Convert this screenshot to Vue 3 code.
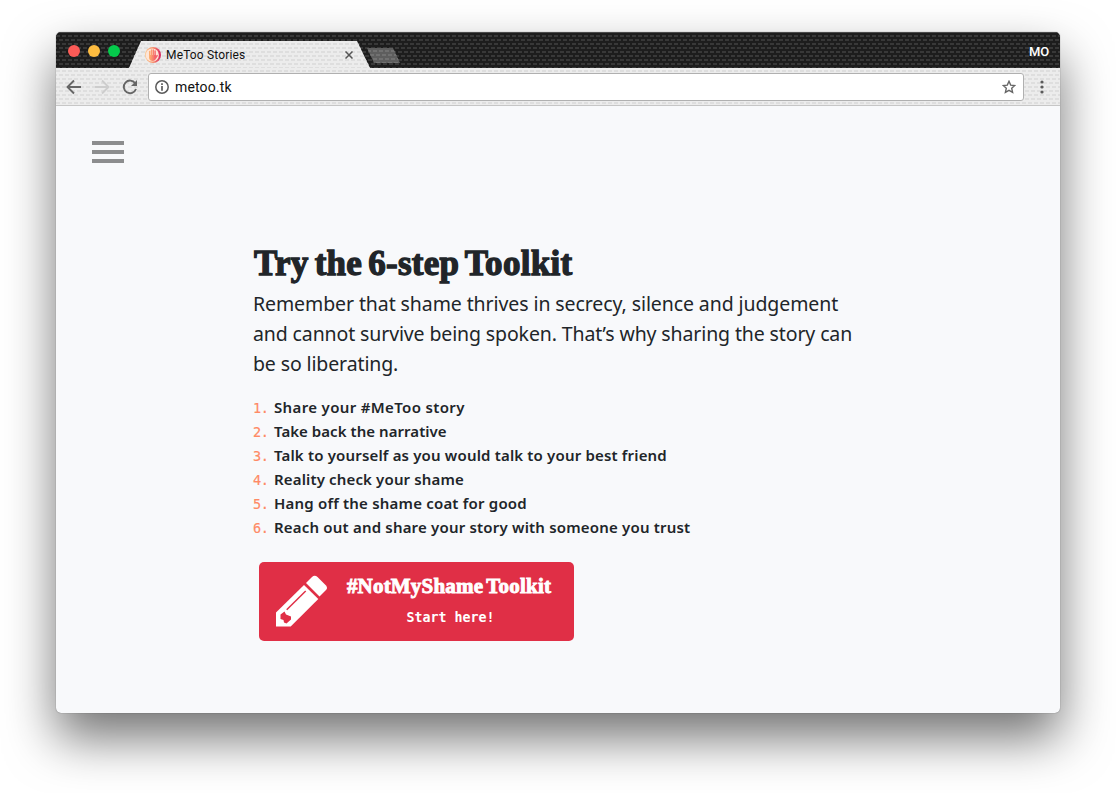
<script setup>
const steps = [
  'Share your #MeToo story',
  'Take back the narrative',
  'Talk to yourself as you would talk to your best friend',
  'Reality check your shame',
  'Hang off the shame coat for good',
  'Reach out and share your story with someone you trust'
]
const lines = [
  'Remember that shame thrives in secrecy, silence and judgement',
  'and cannot survive being spoken. That’s why sharing the story can',
  'be so liberating.'
]
</script>

<template>
  <div class="desktop">
    <div class="window">
      <div class="titlebar">
        <div class="lights">
          <span class="light light-close" />
          <span class="light light-min" />
          <span class="light light-max" />
        </div>
        <div class="tab">
          <svg class="favicon" width="16" height="16" viewBox="0 0 16 16">
            <defs>
              <linearGradient id="ring" x1="0" x2="1" y1="0" y2="0">
                <stop offset="0" stop-color="#fdc98f" />
                <stop offset="0.5" stop-color="#f9906b" />
                <stop offset="1" stop-color="#d6215f" />
              </linearGradient>
              <linearGradient id="hand" x1="0" x2="1" y1="0" y2="0">
                <stop offset="0" stop-color="#fdb56f" />
                <stop offset="1" stop-color="#f4586a" />
              </linearGradient>
            </defs>
            <circle cx="8" cy="8" r="8" fill="url(#ring)" />
            <circle cx="7.3" cy="8" r="6.6" fill="#fde6d8" />
            <path d="M4 8h7v3q-.500 3-3.500 3T4 11z" fill="url(#hand)" />
            <path d="M4.700 4.500v5" stroke="#fdae72" stroke-width="1.400" stroke-linecap="round" />
            <path d="M6.500 3v6" stroke="#fb9a70" stroke-width="1.400" stroke-linecap="round" />
            <path d="M8.300 3v6" stroke="#f9806b" stroke-width="1.400" stroke-linecap="round" />
            <path d="M10.100 4v6M10.600 11l1.600-2.500" stroke="#f4626a" stroke-width="1.400" stroke-linecap="round" />
          </svg>
          <span class="tab-title">MeToo Stories</span>
          <svg class="tab-close" width="8" height="8" viewBox="0 0 8 8">
            <path d="M.5.5l7 7M7.500.500l-7 7" stroke="#555" stroke-width="1.500" />
          </svg>
        </div>
        <div class="new-tab" />
        <span class="profile">MO</span>
      </div>
      <div class="toolbar">
        <svg class="nav-icon" width="16" height="16" viewBox="0 0 16 16">
          <path d="M15 8H2M8 1.500L1.500 8 8 14.500" fill="none" stroke="#666" stroke-width="1.900" />
        </svg>
        <svg class="nav-icon" width="16" height="16" viewBox="0 0 16 16">
          <path d="M1 8h13M8 1.500L14.500 8 8 14.500" fill="none" stroke="#cdcdcd" stroke-width="1.900" />
        </svg>
        <svg class="nav-icon" width="16" height="16" viewBox="0 0 16 16">
          <path d="M13.200 4.200A6.300 6.300 0 1 0 14 10" fill="none" stroke="#666" stroke-width="1.900" />
          <path d="M15 1v6H9z" fill="#666" />
        </svg>
        <div class="address">
          <svg width="14" height="14" viewBox="0 0 14 14">
            <circle cx="7" cy="7" r="6.200" fill="none" stroke="#5a5a5a" stroke-width="1.500" />
            <path d="M7 3.200v1.700M7 6v4.700" stroke="#5a5a5a" stroke-width="1.700" />
          </svg>
          <span class="url">metoo.tk</span>
          <svg width="14" height="14" viewBox="0 0 14 14">
            <path d="M7 1.300l1.700 3.800 4.100.4-3.100 2.800.9 4.100L7 10.300l-3.600 2.100.9-4.100L1.200 5.500l4.100-.4z" fill="none" stroke="#666" stroke-width="1.400" />
          </svg>
        </div>
        <svg class="menu-dots" width="4" height="14" viewBox="0 0 4 14">
          <circle cx="2" cy="2" r="1.600" fill="#5a5a5a" />
          <circle cx="2" cy="7" r="1.600" fill="#5a5a5a" />
          <circle cx="2" cy="12" r="1.600" fill="#5a5a5a" />
        </svg>
      </div>
      <div class="page">
        <button class="hamburger" aria-label="Menu"><i /><i /><i /></button>
        <main class="content">
          <h1 class="title">Try the 6-step Toolkit</h1>
          <p class="intro">
            <span v-for="line in lines" :key="line" class="intro-line">{{ line }}</span>
          </p>
          <ol class="steps">
            <li v-for="(step, i) in steps" :key="step">
              <span class="num">{{ i + 1 }}.</span>
              <span :class="['step', `step-${i + 1}`]">{{ step }}</span>
            </li>
          </ol>
          <a class="cta">
            <svg class="pencil" width="52" height="52" viewBox="0 0 52 52">
              <path d="M0 37.500L28 10l14.300 14L14.700 51.500H0z" fill="#fff" />
              <path d="M30 8l6-6q2.500-2.500 5.500 0l8.500 8.500q2 2.500 0 4.500l-6.500 6.500z" fill="#fff" />
              <path d="M10.700 34.700L29.700 16" stroke="#e02f46" stroke-width="1.500" />
              <path d="M4.500 39.500L8.500 36.500l1.500 3 5 2v3l-4.500 4-2.500-1-.500-2.500-3-1z" fill="#e02f46" />
            </svg>
            <span class="cta-text">
              <span class="cta-title">#NotMyShame Toolkit</span>
              <span class="cta-sub">Start here!</span>
            </span>
          </a>
        </main>
      </div>
    </div>
  </div>
</template>

<style>
body {
  background: #fff;
  overflow: hidden;
}
</style>

<style scoped>
.desktop {
  box-sizing: border-box;
  width: 1116px;
  height: 793px;
  padding: 32px 56px;
  overflow: hidden;
  font-family: Roboto, sans-serif;
}
.window {
  height: 681px;
  border-radius: 5px;
  overflow: hidden;
  background: #f8f9fb;
  box-shadow: 0 0 1px rgba(0, 0, 0, 0.6), 0 25px 50px rgba(0, 0, 0, 0.55);
}
.titlebar {
  display: flex;
  align-items: flex-end;
  box-sizing: border-box;
  height: 36px;
  border-top: 1px solid #4a4a4a;
  background: #1d1d1d url("data:image/svg+xml,%3Csvg xmlns='http://www.w3.org/2000/svg' width='6' height='8'%3E%3Cpath d='M0 2h4v2H0zM3 6h3v2H3zM0 6h1v2H0z' fill='%23383838'/%3E%3C/svg%3E");
}
.lights {
  display: flex;
  gap: 8px;
  width: 60px;
  padding: 0 1px 11px 12px;
}
.light {
  width: 12px;
  height: 12px;
  border-radius: 50%;
}
.light-close {
  background: #fc5b57;
}
.light-min {
  background: #fdbc40;
}
.light-max {
  background: #05cb4c;
}
.tab,
.toolbar {
  background: #ececec url("data:image/svg+xml,%3Csvg xmlns='http://www.w3.org/2000/svg' width='6' height='8'%3E%3Cpath d='M0 2h4v2H0zM3 6h3v2H3zM0 6h1v2H0z' fill='%23dedede'/%3E%3C/svg%3E");
}
.tab {
  display: flex;
  align-items: center;
  box-sizing: border-box;
  width: 241px;
  height: 27px;
  padding: 0 17px 0 16px;
  clip-path: polygon(12px 0, 228px 0, 241px 100%, 0 100%);
}
.tab-title {
  flex: 1;
  margin-left: 5px;
  color: #111;
  font-size: 12px;
  letter-spacing: 0.15px;
}
.new-tab {
  width: 33px;
  height: 15px;
  margin: 0 0 5px -3px;
  background: #5e5e5e url("data:image/svg+xml,%3Csvg xmlns='http://www.w3.org/2000/svg' width='6' height='8'%3E%3Cpath d='M0 2h4v2H0zM3 6h3v2H3zM0 6h1v2H0z' fill='%23717171'/%3E%3C/svg%3E");
  clip-path: polygon(0 0, 26px 0, 33px 100%, 7px 100%);
}
.profile {
  margin: 0 11px 9px auto;
  color: #fff;
  font-size: 13px;
  font-weight: 500;
  letter-spacing: -0.2px;
}
.toolbar {
  display: flex;
  align-items: center;
  box-sizing: border-box;
  height: 38px;
  padding: 0 16px 0 10px;
  border-bottom: 1px solid #c6c6c6;
}
.nav-icon {
  margin-right: 12px;
}
.address {
  display: flex;
  flex: 1;
  align-items: center;
  box-sizing: border-box;
  height: 28px;
  margin-right: 16px;
  margin-left: -2px;
  padding: 0 7px 0 6px;
  border: 1px solid #b0b0b0;
  border-radius: 3px;
  background: #fff;
}
.url {
  flex: 1;
  margin-left: 6px;
  color: #111;
  font-size: 14px;
  letter-spacing: 0.15px;
}
.page {
  padding: 35px 36px;
}
.hamburger {
  display: flex;
  flex-direction: column;
  gap: 5px;
  width: 32px;
  padding: 0;
  border: 0;
  background: none;
}
.hamburger i {
  height: 4px;
  background: #8c8d8e;
}
.content {
  margin: 82px 0 0 161px;
}
.title {
  box-sizing: border-box;
  height: 44px;
  margin: 0;
  padding-left: 1px;
  color: #212529;
  font: 700 35px/38px "Liberation Serif", serif;
  letter-spacing: 0.28px;
  word-spacing: -3px;
  white-space: nowrap;
  -webkit-text-stroke: 1.3px #212529;
}
.intro {
  margin: 0;
  color: #212529;
  font: 19.5px/30px "Noto Sans", sans-serif;
  letter-spacing: -0.09px;
}
.intro-line {
  display: block;
  white-space: nowrap;
}
.intro-line:nth-child(n + 2) {
  letter-spacing: -0.12px;
}
.steps {
  margin: 16px 0 23px;
  padding: 0;
  list-style: none;
}
.steps li {
  display: flex;
  height: 24px;
  color: #212529;
  font: 600 15px/24px "Noto Sans", sans-serif;
}
.num {
  width: 21px;
  color: #ff8a65;
  font: 13.5px/26px "DejaVu Sans Mono", monospace;
  letter-spacing: -0.3px;
  -webkit-text-stroke: 0.2px #ff8a65;
}
.step-1 {
  letter-spacing: 0.35px;
}
.step-2 {
  letter-spacing: 0.05px;
}
.step-3 {
  letter-spacing: 0.17px;
}
.step-4 {
  letter-spacing: 0.15px;
}
.step-5 {
  letter-spacing: 0.2px;
}
.step-6 {
  letter-spacing: 0.19px;
}
.cta {
  display: flex;
  box-sizing: border-box;
  width: 315px;
  height: 79px;
  margin-left: 6px;
  padding: 13px 17px;
  border-radius: 5px;
  background: #e02f46;
  color: #fff;
}
.cta-text {
  display: flex;
  flex-direction: column;
  align-items: center;
  width: 208px;
  margin-left: 17px;
}
.cta-title {
  height: 28px;
  font: 700 21px/23px "Liberation Serif", serif;
  letter-spacing: 0.2px;
  word-spacing: -2px;
  white-space: nowrap;
  -webkit-text-stroke: 0.9px #fff;
}
.cta-sub {
  margin: 7px 0 0 3px;
  font: 700 13.3px/20px "DejaVu Sans Mono", monospace;
}
</style>
